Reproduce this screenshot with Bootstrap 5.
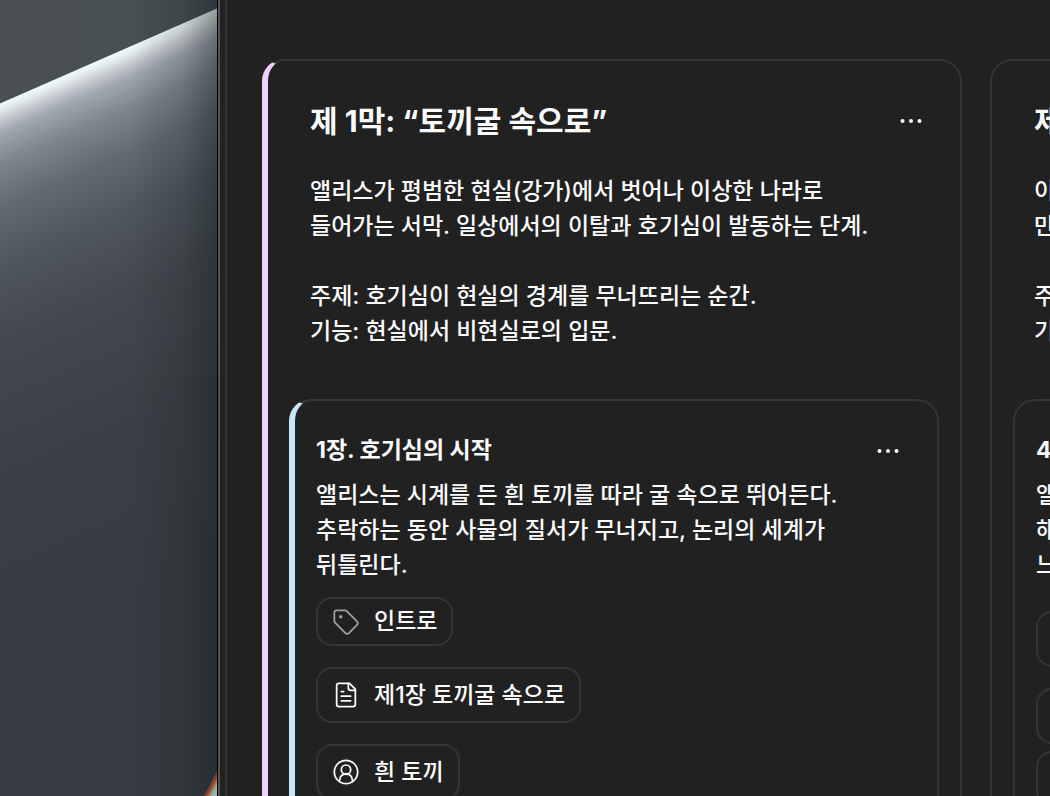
<!DOCTYPE html>
<html lang="ko">
<head>
<meta charset="utf-8">
<meta name="viewport" content="width=device-width, initial-scale=1">
<title>이야기 보드</title>
<link href="https://cdn.jsdelivr.net/npm/bootstrap@5.3.0/dist/css/bootstrap.min.css" rel="stylesheet">
<style>
  body { background: #212121; color: #fafafa; font-family: Inter, "Noto Sans CJK KR", sans-serif; font-size: 23px; line-height: 35px; font-weight: 500; }
  .desktop { flex: 0 0 217px; background: #343a3e; }
  .app-window { border-left: 1px solid #000; background: #222; }
  .app-edge { border-left: 2px solid #545454; padding-left: 5px; }
  .board { border-left: 2px solid #34343a; padding: 59px 0 0 35px; gap: 28px; background: #212121; }
  .act, .chapter { border: 2px solid #34343a; border-bottom: 0; border-radius: 22px 22px 0 0; background: #212121; }
  .act { flex: 0 0 700px; padding: 39px 21px 0; }
  .act-pink { border-left: 6px solid #f0cffa; }
  .act-body { padding: 0 14px 0 21px; }
  .act-title { font-size: 30px; line-height: 42px; font-weight: 700; }
  .act-text { margin: 32px 0 50px; }
  .chapter { padding: 32px 35px 0 21px; }
  .chapter-blue { border-left: 6px solid #c8e6fa; }
  .chapter-title { font-size: 23px; line-height: 35px; font-weight: 700; }
  .chapter-text { margin: 10px 0 14px; }
  .chapter-text.roomy { margin-bottom: 28px; }
  .chips { gap: 21px; }
  .chips.tight { gap: 7px; }
  .chip { height: 56px; padding: 0 14px; gap: 14px; color: #fafafa; background: transparent; border: 2px solid #34343a; border-radius: 16px; font-weight: 500; white-space: nowrap; }
  .chip-short { height: 49px; }
  .chip svg, .more svg { display: block; width: 28px; height: 28px; flex: none; }
  .more { border: 0; padding: 0; background: transparent; color: #fafafa; }
  .tag-icon { color: #a1a1aa; }
</style>
</head>
<body class="vh-100 overflow-hidden d-flex">
<div class="desktop h-100">
  <svg class="d-block w-100 h-100" viewBox="0 0 217 796" preserveAspectRatio="xMidYMin slice" aria-hidden="true">
    <defs>
      <linearGradient id="sheen" gradientUnits="userSpaceOnUse" x1="0" y1="103" x2="199" y2="562">
        <stop offset="0" stop-color="#effcfc"/>
        <stop offset=".014" stop-color="#e3eaeb"/>
        <stop offset=".03" stop-color="#c6ccd0"/>
        <stop offset=".055" stop-color="#a2a8b0"/>
        <stop offset=".11" stop-color="#7f868e"/>
        <stop offset=".19" stop-color="#636a71"/>
        <stop offset=".3" stop-color="#4f565c"/>
        <stop offset=".45" stop-color="#42484d"/>
        <stop offset=".7" stop-color="#393f44"/>
        <stop offset="1" stop-color="#363c41"/>
      </linearGradient>
      <linearGradient id="upper" x1="0" x2="1" y1="0" y2="0">
        <stop offset="0" stop-color="#4a4f52"/>
        <stop offset=".6" stop-color="#485054"/>
        <stop offset="1" stop-color="#444b4f"/>
      </linearGradient>
      <linearGradient id="shade" x1="0" x2="1" y1="0" y2="0">
        <stop offset=".6" stop-color="#141c1e" stop-opacity="0"/>
        <stop offset=".84" stop-color="#141c1e" stop-opacity=".16"/>
        <stop offset="1" stop-color="#141c1e" stop-opacity=".42"/>
      </linearGradient>
      <linearGradient id="prism" gradientUnits="userSpaceOnUse" x1="206" y1="790" x2="215" y2="795">
        <stop offset="0" stop-color="#7b3b2c"/>
        <stop offset=".3" stop-color="#a5452f"/>
        <stop offset=".5" stop-color="#a3903f"/>
        <stop offset=".7" stop-color="#a9bdc2"/>
        <stop offset="1" stop-color="#bccbd9"/>
      </linearGradient>
    </defs>
    <rect width="217" height="796" fill="url(#upper)"/>
    <path d="M0 103.500L217 8.500V796H0Z" fill="url(#sheen)"/>
    <rect width="217" height="796" fill="url(#shade)"/>
    <path d="M217 771L204 796H217Z" fill="url(#prism)" opacity=".85"/>
  </svg>
</div>
<div class="app-window flex-fill h-100 overflow-hidden">
  <div class="app-edge h-100">
    <main class="board d-flex h-100 overflow-hidden">
      <section class="act act-pink">
        <div class="act-body">
          <header class="d-flex align-items-center justify-content-between">
            <h1 class="act-title m-0">제 1막: “토끼굴 속으로”</h1>
            <button class="more" type="button" aria-label="더보기"><svg viewBox="0 0 28 28" fill="currentColor"><circle cx="5.500" cy="14" r="2"/><circle cx="14" cy="14" r="2"/><circle cx="22.500" cy="14" r="2"/></svg></button>
          </header>
          <p class="act-text">앨리스가 평범한 현실(강가)에서 벗어나 이상한 나라로<br>들어가는 서막. 일상에서의 이탈과 호기심이 발동하는 단계.<br><br>주제: 호기심이 현실의 경계를 무너뜨리는 순간.<br>기능: 현실에서 비현실로의 입문.</p>
        </div>
        <article class="chapter chapter-blue h-100">
          <header class="d-flex align-items-center justify-content-between">
            <h2 class="chapter-title m-0">1장. 호기심의 시작</h2>
            <button class="more" type="button" aria-label="더보기"><svg viewBox="0 0 28 28" fill="currentColor"><circle cx="5.500" cy="14" r="2"/><circle cx="14" cy="14" r="2"/><circle cx="22.500" cy="14" r="2"/></svg></button>
          </header>
          <p class="chapter-text">앨리스는 시계를 든 흰 토끼를 따라 굴 속으로 뛰어든다.<br>추락하는 동안 사물의 질서가 무너지고, 논리의 세계가<br>뒤틀린다.</p>
          <div class="chips d-flex flex-column align-items-start">
            <button class="chip chip-short d-flex align-items-center" type="button">
              <svg class="tag-icon" viewBox="0 0 24 24" fill="none" stroke="currentColor" stroke-width="1.500" stroke-linecap="round" stroke-linejoin="round"><path d="M12.586 2.586A2 2 0 0 0 11.172 2H4a2 2 0 0 0-2 2v7.172a2 2 0 0 0 .586 1.414l8.704 8.704a2.426 2.426 0 0 0 3.420 0l6.580-6.580a2.426 2.426 0 0 0 0-3.420z"/><circle cx="7.500" cy="7.500" r=".7" fill="currentColor"/></svg>
              <span>인트로</span>
            </button>
            <button class="chip d-flex align-items-center" type="button">
              <svg viewBox="0 0 24 24" fill="none" stroke="currentColor" stroke-width="1.500" stroke-linecap="round" stroke-linejoin="round"><path d="M15 2H6a2 2 0 0 0-2 2v16a2 2 0 0 0 2 2h12a2 2 0 0 0 2-2V7Z"/><path d="M14 2v4a2 2 0 0 0 2 2h4M10 9H8M16 13H8M16 17H8"/></svg>
              <span>제1장 토끼굴 속으로</span>
            </button>
            <button class="chip d-flex align-items-center" type="button">
              <svg viewBox="0 0 24 24" fill="none" stroke="currentColor" stroke-width="1.500" stroke-linecap="round" stroke-linejoin="round"><circle cx="12" cy="12" r="10"/><circle cx="12" cy="10" r="4"/><path d="M6.500 20.200V19a5.500 5.500 0 0 1 11 0v1.200"/></svg>
              <span>흰 토끼</span>
            </button>
          </div>
        </article>
      </section>
      <section class="act">
        <div class="act-body">
          <h1 class="act-title m-0">제</h1>
          <p class="act-text">이<br>만<br><br>주<br>기</p>
        </div>
        <article class="chapter h-100">
          <h2 class="chapter-title m-0">4</h2>
          <p class="chapter-text roomy">앨<br>해<br>느</p>
          <div class="chips d-flex flex-column align-items-stretch">
            <button class="chip" type="button" aria-label="문서"></button>
            <div class="chips tight d-flex flex-column">
              <button class="chip" type="button" aria-label="인물"></button>
              <button class="chip" type="button" aria-label="인물"></button>
            </div>
          </div>
        </article>
      </section>
    </main>
  </div>
</div>
<script src="https://cdn.jsdelivr.net/npm/bootstrap@5.3.0/dist/js/bootstrap.bundle.min.js"></script>
</body>
</html>
